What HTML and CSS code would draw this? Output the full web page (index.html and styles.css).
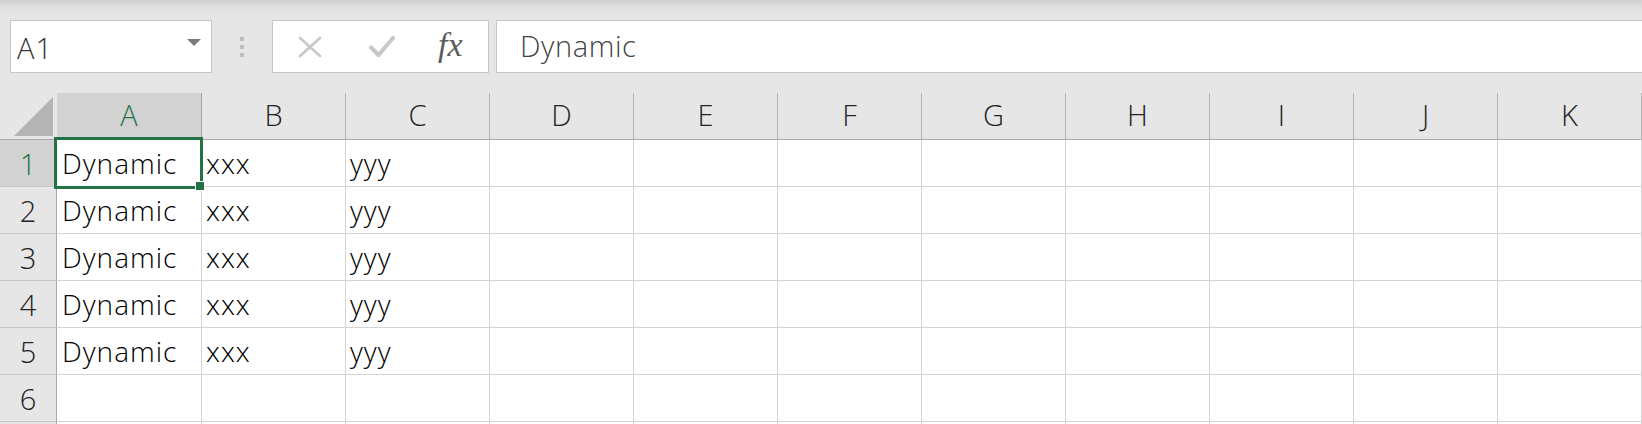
FILE: index.html
```html
<!DOCTYPE html>
<html lang="ja">
<head>
<meta charset="utf-8">
<title>Book1</title>
<link rel="stylesheet" href="styles.css">
</head>
<body>
<div class="app">
  <div class="toolbar">
    <div class="namebox">
      <span class="namebox-ref">A1</span>
      <span class="namebox-drop"></span>
    </div>
    <div class="grip"><i></i><i></i><i></i></div>
    <div class="fx-buttons">
      <svg class="fx-cancel" width="26" height="22" viewBox="0 0 26 22">
        <path d="M3 2 L23 20 M23 2 L3 20" stroke="#c8c8c8" stroke-width="2.6" fill="none" stroke-linecap="round"/>
      </svg>
      <svg class="fx-enter" width="28" height="24" viewBox="0 0 28 24">
        <path d="M3 12.5 L10.5 20 L25 3" stroke="#c8c8c8" stroke-width="4.2" fill="none" stroke-linecap="round" stroke-linejoin="round"/>
      </svg>
      <span class="fx-label">fx</span>
    </div>
    <div class="formula">Dynamic</div>
  </div>

  <div class="sheet">
    <div class="corner"><span class="corner-tri"></span></div>
    <div class="colhead active">A</div>
    <div class="colhead">B</div>
    <div class="colhead">C</div>
    <div class="colhead">D</div>
    <div class="colhead">E</div>
    <div class="colhead">F</div>
    <div class="colhead">G</div>
    <div class="colhead">H</div>
    <div class="colhead">I</div>
    <div class="colhead">J</div>
    <div class="colhead">K</div>

    <div class="rowhead active">1</div>
    <div class="cell selected">Dynamic<span class="sel-frame"><span class="sel-handle"></span></span></div>
    <div class="cell">xxx</div><div class="cell">yyy</div>
    <div class="cell"></div><div class="cell"></div><div class="cell"></div><div class="cell"></div><div class="cell"></div><div class="cell"></div><div class="cell"></div><div class="cell"></div>

    <div class="rowhead">2</div>
    <div class="cell">Dynamic</div><div class="cell">xxx</div><div class="cell">yyy</div>
    <div class="cell"></div><div class="cell"></div><div class="cell"></div><div class="cell"></div><div class="cell"></div><div class="cell"></div><div class="cell"></div><div class="cell"></div>

    <div class="rowhead">3</div>
    <div class="cell">Dynamic</div><div class="cell">xxx</div><div class="cell">yyy</div>
    <div class="cell"></div><div class="cell"></div><div class="cell"></div><div class="cell"></div><div class="cell"></div><div class="cell"></div><div class="cell"></div><div class="cell"></div>

    <div class="rowhead">4</div>
    <div class="cell">Dynamic</div><div class="cell">xxx</div><div class="cell">yyy</div>
    <div class="cell"></div><div class="cell"></div><div class="cell"></div><div class="cell"></div><div class="cell"></div><div class="cell"></div><div class="cell"></div><div class="cell"></div>

    <div class="rowhead">5</div>
    <div class="cell">Dynamic</div><div class="cell">xxx</div><div class="cell">yyy</div>
    <div class="cell"></div><div class="cell"></div><div class="cell"></div><div class="cell"></div><div class="cell"></div><div class="cell"></div><div class="cell"></div><div class="cell"></div>

    <div class="rowhead">6</div>
    <div class="cell"></div><div class="cell"></div><div class="cell"></div>
    <div class="cell"></div><div class="cell"></div><div class="cell"></div><div class="cell"></div><div class="cell"></div><div class="cell"></div><div class="cell"></div><div class="cell"></div>

    <div class="rowhead"></div>
    <div class="cell"></div><div class="cell"></div><div class="cell"></div>
    <div class="cell"></div><div class="cell"></div><div class="cell"></div><div class="cell"></div><div class="cell"></div><div class="cell"></div><div class="cell"></div><div class="cell"></div>
  </div>
</div>
</body>
</html>
```

FILE: styles.css
```css
html, body {
  margin: 0;
  padding: 0;
  background: #e6e6e6;
  overflow: hidden;
}

.app {
  width: 1642px;
  height: 424px;
  overflow: hidden;
  font-family: "Open Sans", "Noto Sans CJK JP", sans-serif;
  font-weight: 350;
}

/* ---- formula bar strip ---- */
.toolbar {
  height: 93px;
  box-sizing: border-box;
  padding: 20px 0 0 10px;
  display: flex;
  align-items: flex-start;
  background: linear-gradient(to bottom, #cfcfcf 0px, #dcdcdc 5px, #e4e4e4 11px, #e6e6e6 16px);
}

.namebox {
  width: 202px;
  height: 53px;
  box-sizing: border-box;
  background: #fff;
  border: 1px solid #c6c6c6;
  display: flex;
  align-items: center;
  justify-content: space-between;
  padding: 0 10px 0 6px;
}

.namebox-ref {
  font-size: 29px;
  color: #333;
  line-height: 1;
  margin-top: 2px;
  letter-spacing: 1px;
}

.namebox-drop {
  width: 0;
  height: 0;
  border-left: 7px solid transparent;
  border-right: 7px solid transparent;
  border-top: 7px solid #7a7a7a;
  margin-top: -8px;
}

.grip {
  width: 60px;
  height: 53px;
  display: flex;
  flex-direction: column;
  align-items: center;
  justify-content: center;
  gap: 4px;
}

.grip i {
  display: block;
  width: 4px;
  height: 4px;
  background: #bdbdbd;
}

.fx-buttons {
  width: 217px;
  height: 53px;
  box-sizing: border-box;
  background: #fff;
  border: 1px solid #c6c6c6;
  display: flex;
  align-items: center;
  padding-left: 24px;
}

.fx-cancel {
  margin-top: 1px;
}

.fx-enter {
  margin-left: 45px;
}

.fx-label {
  margin-left: 42px;
  font-family: "Liberation Serif", serif;
  font-style: italic;
  font-weight: 400;
  font-size: 34px;
  color: #5c5c5c;
  line-height: 1;
  margin-top: -4px;
}

.formula {
  flex: 1;
  margin-left: 7px;
  margin-right: -2px;
  height: 53px;
  box-sizing: border-box;
  background: #fff;
  border: 1px solid #c6c6c6;
  font-size: 29px;
  color: #444;
  padding-left: 23px;
  line-height: 49px;
  letter-spacing: 0.6px;
}

/* ---- grid ---- */
.sheet {
  display: grid;
  grid-template-columns: 57px 145px repeat(10, 144px);
  grid-auto-rows: 47px;
  background: #fff;
  position: relative;
}

.corner,
.colhead {
  background: #e6e6e6;
  box-sizing: border-box;
  border-bottom: 1px solid #a9a9a9;
}

.corner {
  border-right: 1px solid #e6e6e6;
  position: relative;
}

.corner-tri {
  position: absolute;
  right: 3px;
  bottom: 3px;
  width: 0;
  height: 0;
  border-left: 39px solid transparent;
  border-bottom: 39px solid #b4b4b4;
}

.colhead {
  border-right: 1px solid #b4b4b4;
  display: flex;
  align-items: center;
  justify-content: center;
  font-size: 29px;
  color: #222;
  padding-bottom: 3px;
}

.colhead.active {
  background: #d2d2d2;
  color: #217346;
  border-right-color: #a9a9a9;
}

.rowhead {
  background: #e6e6e6;
  box-sizing: border-box;
  border-right: 1px solid #a9a9a9;
  border-bottom: 1px solid #c8c8c8;
  display: flex;
  align-items: center;
  justify-content: center;
  font-size: 29px;
  color: #222;
}

.rowhead.active {
  background: #d2d2d2;
  color: #217346;
}

.cell {
  box-sizing: border-box;
  border-right: 1px solid #d4d4d4;
  border-bottom: 1px solid #d4d4d4;
  font-size: 28px;
  color: #000;
  line-height: 46px;
  padding-left: 4px;
  letter-spacing: 1px;
  white-space: nowrap;
  position: relative;
}

.cell:nth-child(12n + 2) {
  padding-left: 5px;
}

/* active-cell outline drawn over the gridlines */
.sel-frame {
  position: absolute;
  left: -3px;
  top: -3px;
  width: 149px;
  height: 52px;
  box-sizing: border-box;
  border: 3px solid #217346;
  pointer-events: none;
  z-index: 2;
}

.sel-handle {
  position: absolute;
  right: -4px;
  bottom: -4px;
  width: 8px;
  height: 8px;
  background: #217346;
  box-shadow: 0 0 0 1px #fff;
}
```
